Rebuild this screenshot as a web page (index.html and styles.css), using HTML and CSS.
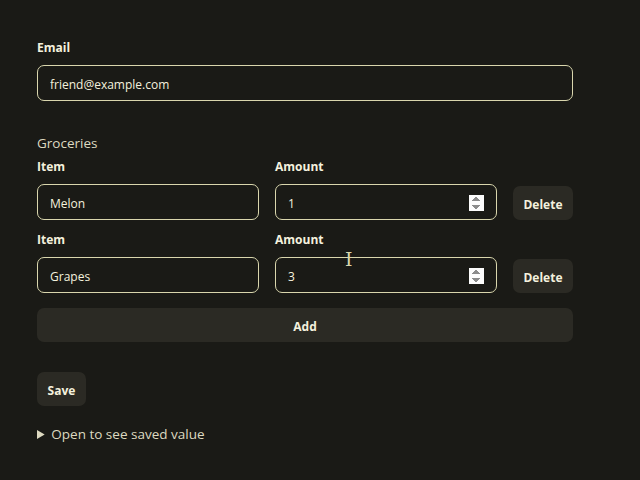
FILE: index.html
```html
<!DOCTYPE html>
<html>
<head>
<meta charset="utf-8">
<link rel="stylesheet" href="styles.css">
</head>
<body>
<form class="form">
  <label class="label" for="email">Email</label>
  <input class="input" id="email" type="text" value="friend@example.com">

  <div class="section-title">Groceries</div>

  <div class="row">
    <div class="field">
      <label class="label">Item</label>
      <input class="input" type="text" value="Melon">
    </div>
    <div class="field">
      <label class="label">Amount</label>
      <input class="input number" type="number" value="1">
    </div>
    <button type="button" class="btn delete">Delete</button>
  </div>

  <div class="row row-2">
    <div class="field">
      <label class="label">Item</label>
      <input class="input" type="text" value="Grapes">
    </div>
    <div class="field">
      <label class="label">Amount</label>
      <input class="input number" type="number" value="3">
    </div>
    <button type="button" class="btn delete">Delete</button>
  </div>

  <button type="button" class="btn add">Add</button>

  <button type="button" class="btn save">Save</button>

  <details class="saved">
    <summary>Open to see saved value</summary>
  </details>
  <span class="cursor">I</span>
</form>
</body>
</html>
```

FILE: styles.css
```css
html, body {
  margin: 0;
  padding: 0;
  background: #1a1a16;
}

body {
  font-family: "Open Sans", "DejaVu Sans", sans-serif;
  color: #f2efd9;
}

.form {
  position: relative;
  width: 536px;
  padding: 39px 0 0 37px;
  display: flex;
  flex-direction: column;
}

.label {
  display: block;
  box-sizing: border-box;
  font-size: 12px;
  font-weight: 700;
  line-height: 16px;
  height: 17px;
  padding-top: 1px;
  margin-bottom: 9px;
  color: #f4f1de;
}

.input {
  box-sizing: border-box;
  height: 36px;
  width: 100%;
  padding: 10px 12px 8px;
  border: 1px solid #d9d6ad;
  border-radius: 7px;
  background: transparent;
  color: #f4f1de;
  font-family: "Open Sans", "DejaVu Sans", sans-serif;
  font-size: 12px;
  line-height: 16px;
  outline: none;
}

.number::-webkit-inner-spin-button {
  opacity: 1;
}

.section-title {
  margin-top: 32px;
  font-size: 13.5px;
  line-height: 20px;
  color: #ddd9c0;
  margin-bottom: 5px;
}

.row {
  display: grid;
  grid-template-columns: 222px 222px 60px;
  column-gap: 16px;
  align-items: end;
}

.row-2 {
  margin-top: 11px;
}

.field {
  display: flex;
  flex-direction: column;
}

.btn {
  box-sizing: border-box;
  border: none;
  border-radius: 7px;
  background: #2b2a24;
  color: #f4f1de;
  font-family: "Open Sans", "DejaVu Sans", sans-serif;
  font-size: 12px;
  font-weight: 700;
  height: 34px;
  padding: 2px 0 0;
  cursor: pointer;
}

.delete {
  width: 60px;
}

.add {
  margin-top: 15px;
  width: 100%;
}

.save {
  margin-top: 30px;
  width: 49px;
}

.saved {
  margin-top: 20px;
  font-size: 13.5px;
  line-height: 16px;
  color: #ddd9c0;
}

.saved summary {
  cursor: pointer;
}

.cursor {
  position: absolute;
  left: 345px;
  top: 249px;
  font-family: "DejaVu Serif", serif;
  font-size: 19px;
  line-height: 20px;
  color: #d9d6ad;
}
```
